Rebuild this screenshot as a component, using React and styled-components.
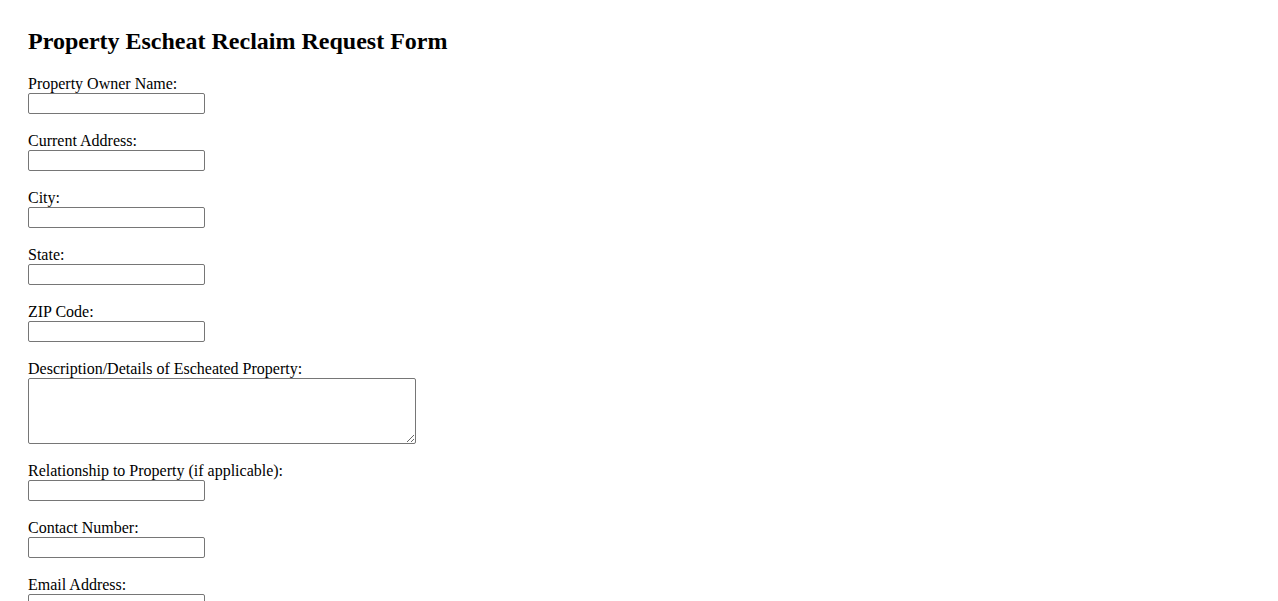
import React from "react"
import styled, {createGlobalStyle} from "styled-components"

const GlobalStyle = createGlobalStyle`
  body {
    margin: 0;
    background: white;
    color: black;
    font-family: "Liberation Serif", "Times New Roman", serif;
    font-size: 16px;
  }
`

const Page = styled.div`
  padding: 28px;
`

const Title = styled.h2`
  font-size: 24px;
  font-weight: bold;
  line-height: 26px;
  margin: 0 0 21px;
`

const Field = styled.div`
  margin-bottom: 18px;
`

const Label = styled.label`
  display: block;
  line-height: 18px;
`

const TextInput = styled.input`
  display: block;
  box-sizing: border-box;
  width: 177px;
  height: 21px;
  margin: 0;
  padding: 1px 2px;
  border: 1px solid #767676;
  border-radius: 2px;
  font-family: Arial, "Liberation Sans", sans-serif;
  font-size: 13px;
`

const TextArea = styled.textarea`
  display: block;
  box-sizing: border-box;
  width: 388px;
  height: 66px;
  margin: 0;
  padding: 2px;
  border: 1px solid #767676;
  border-radius: 2px;
  font-family: "Liberation Mono", monospace;
  font-size: 13px;
`

const fields = [
  {id: "ownerName", label: "Property Owner Name:"},
  {id: "address", label: "Current Address:"},
  {id: "city", label: "City:"},
  {id: "state", label: "State:"},
  {id: "zip", label: "ZIP Code:"},
  {id: "description", label: "Description/Details of Escheated Property:", multi: true},
  {id: "relationship", label: "Relationship to Property (if applicable):"},
  {id: "phone", label: "Contact Number:"},
  {id: "email", label: "Email Address:"},
]

const App = () => {
  return (
    <Page>
      <GlobalStyle />
      <Title>Property Escheat Reclaim Request Form</Title>
      <form onSubmit={(e) => e.preventDefault()}>
        {fields.map((f) => (
          <Field key={f.id}>
            <Label htmlFor={f.id}>{f.label}</Label>
            {f.multi ? <TextArea id={f.id} /> : <TextInput id={f.id} type="text" />}
          </Field>
        ))}
      </form>
    </Page>
  )
}

export default App
